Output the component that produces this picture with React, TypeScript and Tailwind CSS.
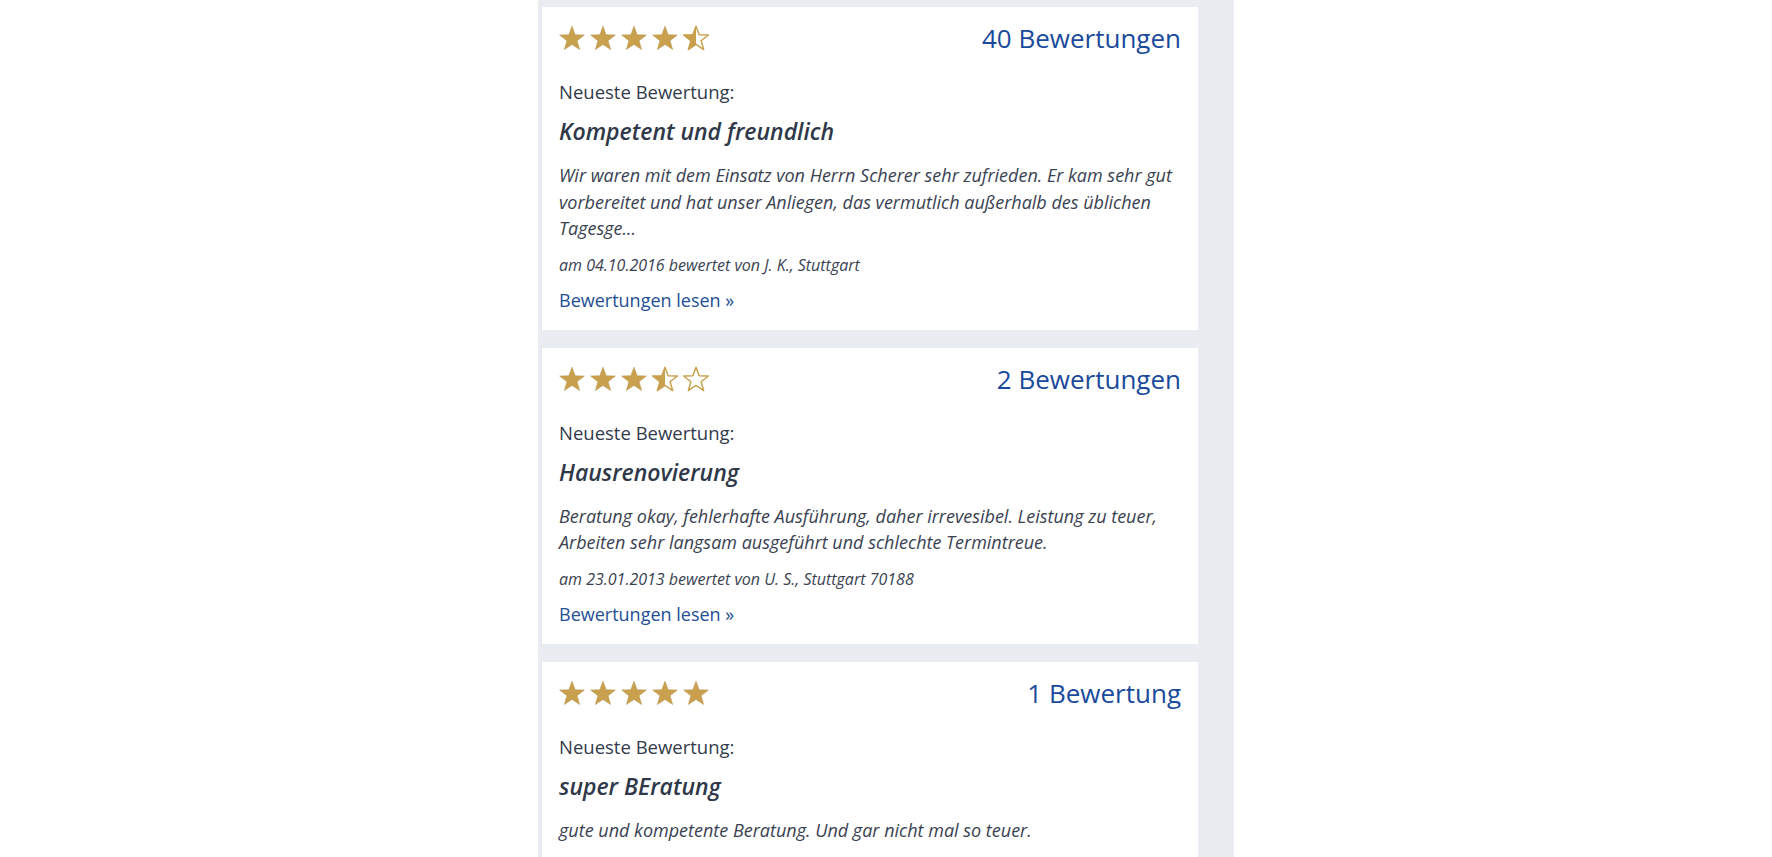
import { useId } from "react";

type Review = {
  rating: number;
  count: string;
  title: string;
  text: string;
  meta: string;
};

const reviews: Review[] = [
  {
    rating: 4.5,
    count: "40 Bewertungen",
    title: "Kompetent und freundlich",
    text: "Wir waren mit dem Einsatz von Herrn Scherer sehr zufrieden. Er kam sehr gut vorbereitet und hat unser Anliegen, das vermutlich außerhalb des üblichen Tagesge...",
    meta: "am 04.10.2016 bewertet von J. K., Stuttgart",
  },
  {
    rating: 3.5,
    count: "2 Bewertungen",
    title: "Hausrenovierung",
    text: "Beratung okay, fehlerhafte Ausführung, daher irrevesibel. Leistung zu teuer, Arbeiten sehr langsam ausgeführt und schlechte Termintreue.",
    meta: "am 23.01.2013 bewertet von U. S., Stuttgart 70188",
  },
  {
    rating: 5,
    count: "1 Bewertung",
    title: "super BEratung",
    text: "gute und kompetente Beratung. Und gar nicht mal so teuer.",
    meta: "am 12.05.2012 bewertet von M. B., Stuttgart",
  },
];

// five-pointed star filling the 24x24 box
const STAR =
  "12,0.6 15.05,8.85 23.89,9.14 16.9,14.6 19.35,23.11 12,18.2 4.65,23.11 7.1,14.6 0.11,9.14 8.95,8.85";

const Star: React.FC<{ fill: "full" | "half" | "empty" }> = ({ fill }) => {
  const id = useId().replace(/:/g, "");
  return (
    <svg width="26" height="26" viewBox="-0.5 -0.5 25 25" className="shrink-0">
      <defs>
        <clipPath id={`h${id}`}>
          <rect x="-1" y="-1" width="13" height="26" />
        </clipPath>
      </defs>
      {fill === "full" ? (
        <polygon points={STAR} fill="#c8a04e" stroke="#b8924a" strokeWidth="0.5" strokeLinejoin="round" />
      ) : (
        <>
          <polygon points={STAR} fill="#fff" stroke="#c8a04e" strokeWidth="1.4" strokeLinejoin="round" />
          {fill === "half" && (
            <polygon points={STAR} fill="#c8a04e" clipPath={`url(#h${id})`} />
          )}
        </>
      )}
    </svg>
  );
};

const Stars: React.FC<{ rating: number }> = ({ rating }) => (
  <div className="flex gap-[5px]">
    {[0, 1, 2, 3, 4].map((i) => (
      <Star
        key={i}
        fill={rating >= i + 1 ? "full" : rating >= i + 0.5 ? "half" : "empty"}
      />
    ))}
  </div>
);

const Card: React.FC<{ review: Review }> = ({ review }) => (
  <div className="bg-white border-l border-[#e4e7eb] pt-[13px] pb-[17px] pl-[17px] pr-[17px]">
    <div className="flex items-center justify-between h-[36px]">
      <Stars rating={review.rating} />
      <a className="text-[26px] leading-[36px] text-[#1a4a9c]">{review.count}</a>
    </div>
    <p className="mt-[23px] text-[18.5px] leading-[26px] text-[#333b4b]">
      Neueste Bewertung:
    </p>
    <h3 className="mt-[10px] text-[23px] leading-[32px] font-semibold italic text-[#2f3849]">
      {review.title}
    </h3>
    <p className="mt-[15px] text-[18px] leading-[26.5px] italic text-[#3a4252]">
      {review.text}
    </p>
    <p className="mt-[12px] text-[16px] leading-[22px] italic text-[#3a4252]">
      {review.meta}
    </p>
    <a className="block mt-[11px] text-[18px] leading-[26px] text-[#234f93]">
      Bewertungen lesen »
    </a>
  </div>
);

export default function App() {
  return (
    <div
      className="w-full h-[857px] overflow-hidden bg-white"
      style={{ fontFamily: '"Open Sans", "Noto Sans", sans-serif' }}
    >
      <div className="mx-auto w-[696px] min-h-full bg-[#e9ecf0] pt-[7px] pl-[3px] pr-[36px]">
        <div className="flex flex-col gap-[18px]">
          {reviews.map((r, i) => (
            <Card key={i} review={r} />
          ))}
        </div>
      </div>
    </div>
  );
}
